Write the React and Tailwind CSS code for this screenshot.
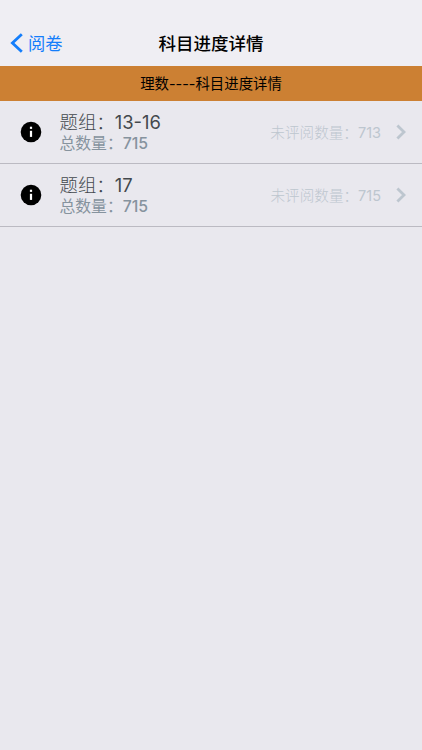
import React from "react";

const groups = [
  { name: "13-16", total: "715", pending: "713" },
  { name: "17", total: "715", pending: "715" },
];

function InfoIcon() {
  return (
    <svg width="22" height="22" viewBox="0 0 22 22" className="shrink-0">
      <circle cx="11" cy="11" r="10.3" fill="#000" />
      <rect x="9.9" y="5.7" width="2.2" height="2.2" fill="#fff" />
      <rect x="9.9" y="9.8" width="2.2" height="6.1" fill="#fff" />
    </svg>
  );
}

function GroupRow({ name, total, pending }) {
  return (
    <li className="flex h-[63px] items-center border-b border-[#bbbac2] pl-5 pr-4">
      <InfoIcon />
      <div className="ml-[17.5px] flex flex-col whitespace-nowrap">
        <div className="flex h-[22px] items-center text-[18.4px] leading-[22px] text-[#43484d]">
          <span className="font-light">题组：</span>
          <span className="text-[18.4px] font-normal">{name}</span>
        </div>
        <div className="mt-px flex h-5 items-center text-[15.8px] leading-5 text-[#86939e]">
          <span>总数量：</span>
          <span className="text-[15.8px] font-medium">{total}</span>
        </div>
      </div>
      <div className="ml-auto flex items-center whitespace-nowrap pt-px text-[14.6px] leading-5 text-[#bdc6cf]">
        <span className="font-light">未评阅数量：</span>
        <span className="text-[14.5px] font-normal">{pending}</span>
      </div>
      <svg width="10" height="16" viewBox="0 0 10 16" className="ml-[15px] shrink-0" fill="none" stroke="#bdc6cf" strokeWidth="2.8">
        <path d="M1.4 1.6 8 8 1.4 14.4" />
      </svg>
    </li>
  );
}

export default function App() {
  return (
    <div className="min-h-screen w-full bg-[#e9e8ee] font-['Inter','Noto_Sans_CJK_SC',sans-serif]">
      <header className="grid h-[66px] grid-cols-3 items-center bg-[#efeef3] pt-[21px]">
        <button className="flex items-center pl-[10px] text-[17.3px] leading-6 text-[#147efb]">
          <svg width="14" height="20" viewBox="0 0 14 20" className="mb-px" fill="none" stroke="currentColor" strokeWidth="2.8">
            <path d="M11.8 1.2 2.4 10l9.4 8.8" />
          </svg>
          <span className="ml-1">阅卷</span>
        </button>
        <h1 className="whitespace-nowrap text-center text-[17.5px] leading-6 font-medium text-black">科目进度详情</h1>
      </header>
      <div className="flex h-[35px] items-center justify-center bg-[#cc8033] text-[14.4px] leading-5 text-black">
        <span>理数</span>
        <span>----</span>
        <span>科目进度详情</span>
      </div>
      <ul>
        {groups.map((group) => (
          <GroupRow key={group.pending} {...group} />
        ))}
      </ul>
    </div>
  );
}
